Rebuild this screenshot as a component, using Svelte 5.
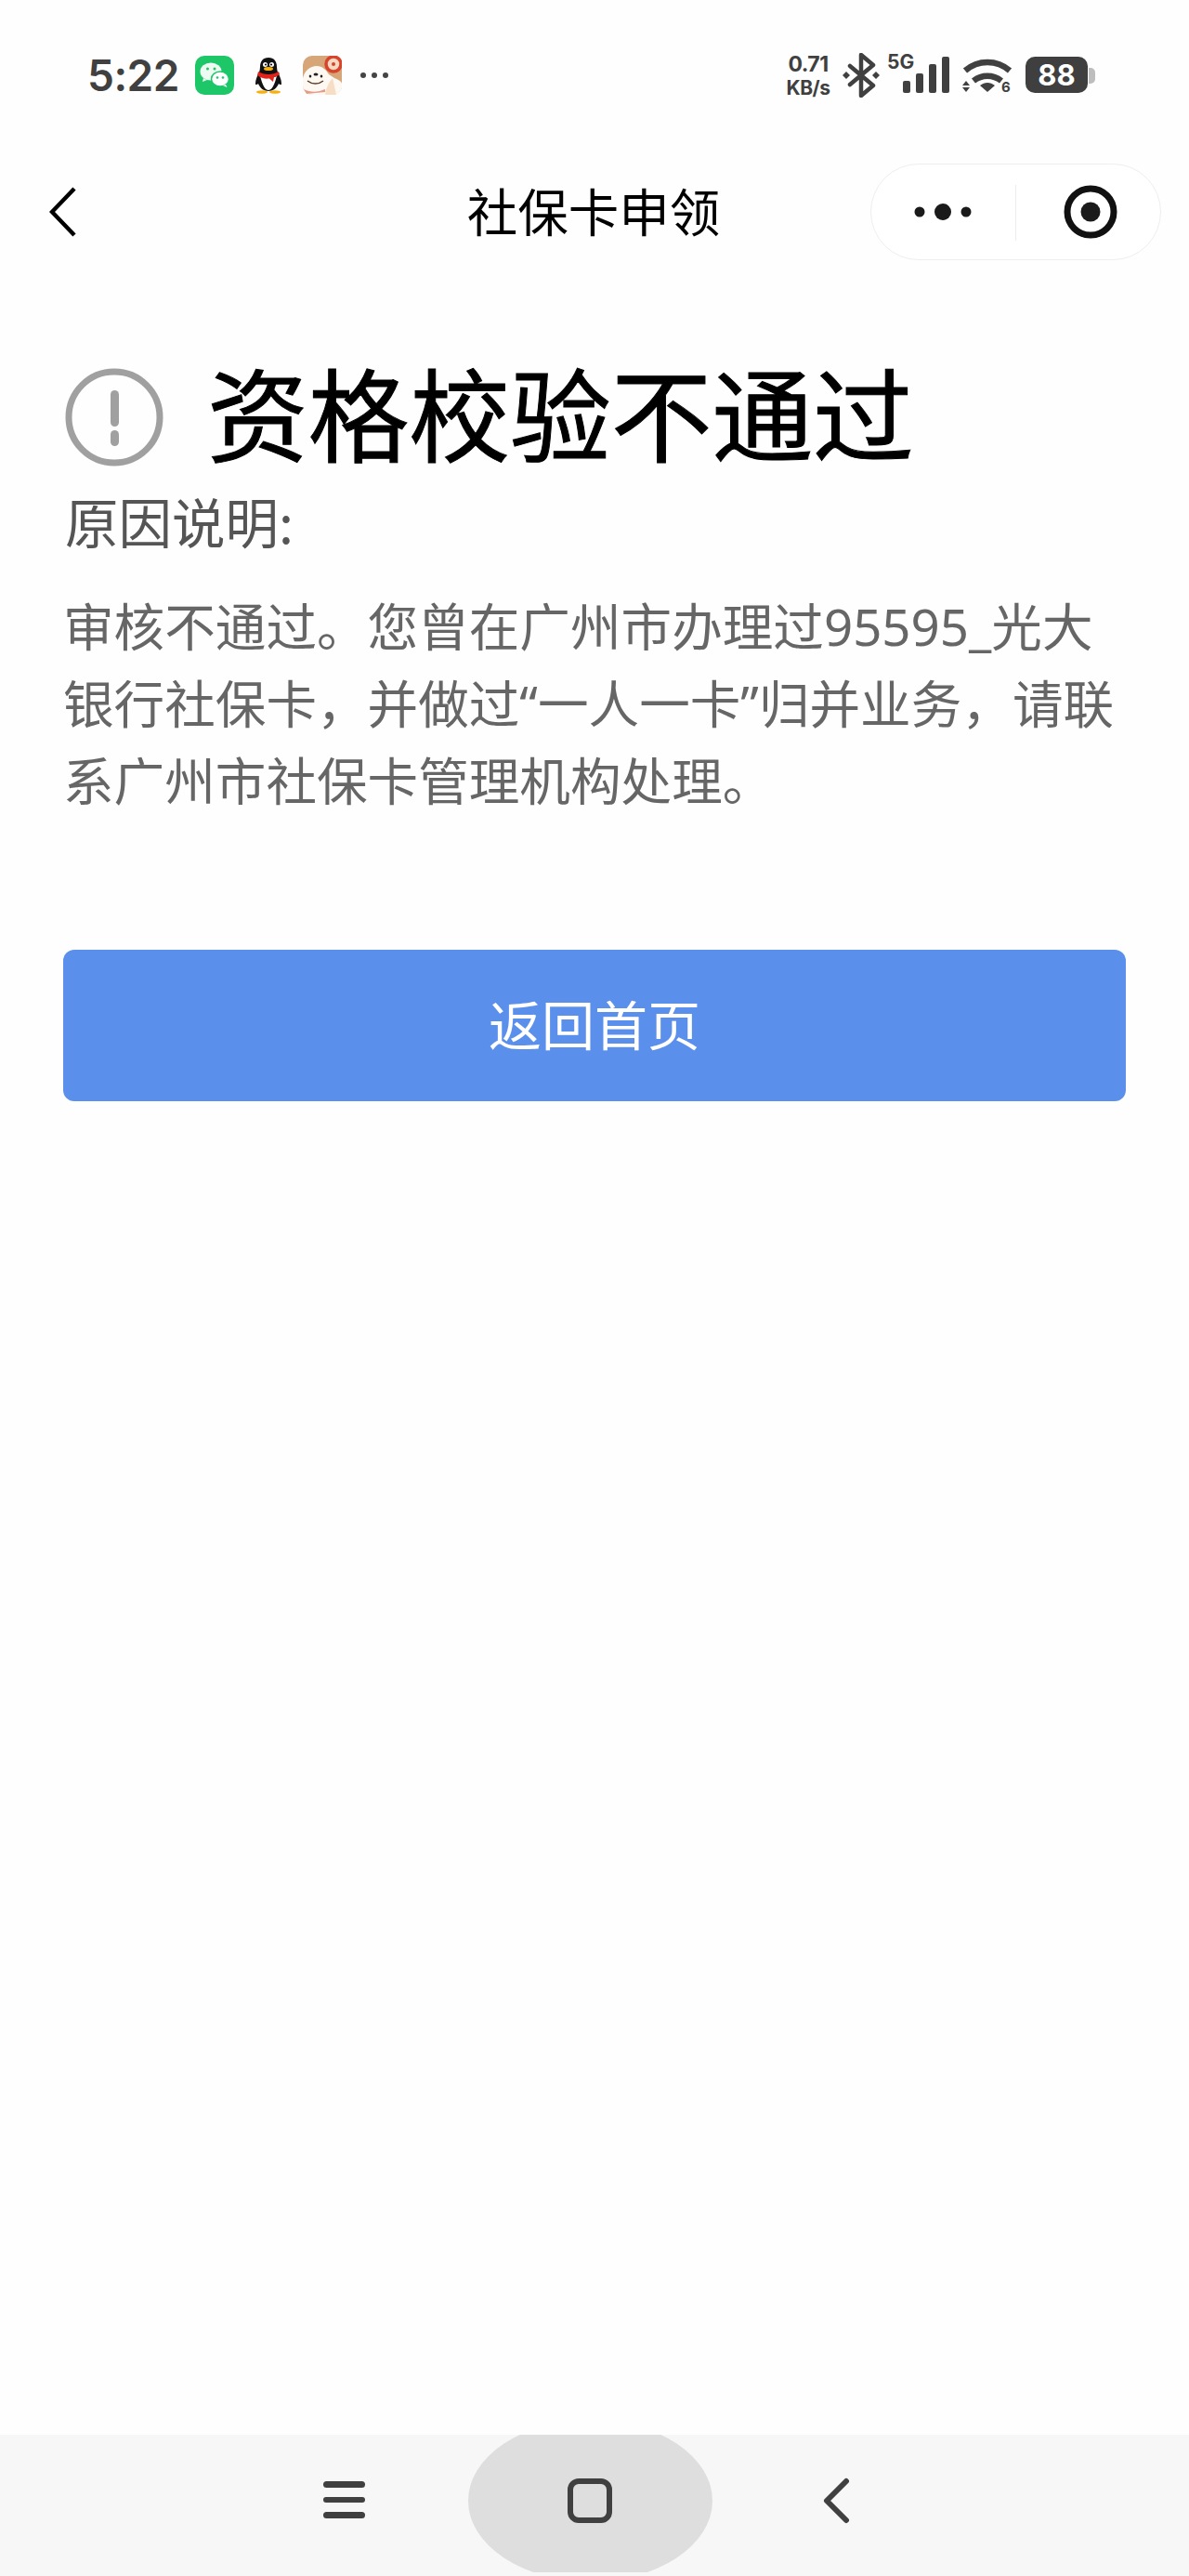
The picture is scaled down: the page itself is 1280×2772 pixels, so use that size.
<script>
  const lines = ['审核不通过。您曾在广州市办理过95595_光大', '银行社保卡，并做过“一人一卡”归并业务，请联', '系广州市社保卡管理机构处理。'];
</script>

<div class="page">
  <div class="status">
    <span class="time">5:22</span>
    <svg class="app wechat" viewBox="0 0 42 42">
      <rect width="42" height="42" rx="10" fill="#1dc768"/>
      <ellipse cx="17" cy="17" rx="11.5" ry="9.5" fill="#fff" opacity=".92"/>
      <path d="M9 24l-1 4 5-2z" fill="#fff" opacity=".92"/>
      <ellipse cx="27" cy="25" rx="9.5" ry="8" fill="#fff" stroke="#1dc768" stroke-width="1.5"/>
      <path d="M33 31l1.5 3-4.5-2z" fill="#fff"/>
      <circle cx="13.500" cy="14" r="1.500" fill="#1dc768"/><circle cx="21" cy="14" r="1.500" fill="#1dc768"/>
      <circle cx="24" cy="23.500" r="1.300" fill="#1dc768"/><circle cx="30" cy="23.500" r="1.300" fill="#1dc768"/>
    </svg>
    <svg class="qq" viewBox="0 0 32 40">
      <path d="M16 1c-6 0-9 4-9 10 0 2-.500 4-1 6-2 3-4 8-4 12 0 2 2 1 3 0 2 5 6 8 11 8s9-3 11-8c1 1 3 2 3 0 0-4-2-9-4-12-.500-2-1-4-1-6 0-6-3-10-9-10z" fill="#111"/>
      <path d="M7 21c2 6 4 15 9 15s7-9 9-15c-5 2-13 2-18 0z" fill="#fff"/>
      <path d="M5 16c6 4 16 4 22 0l1 3c-2 2-4 2.500-6 3l-1 5-4-3.500c-4 .500-9 0-13-3.500z" fill="#e2231a"/>
      <ellipse cx="16" cy="13" rx="5" ry="2" fill="#f6b10f"/>
      <circle cx="12.500" cy="8.500" r="2.500" fill="#fff"/><circle cx="19.500" cy="8.500" r="2.500" fill="#fff"/>
      <circle cx="13" cy="8.500" r="1.100" fill="#111"/><circle cx="19" cy="8.500" r="1.100" fill="#111"/>
      <ellipse cx="9" cy="38" rx="6" ry="1.800" fill="#f6b10f"/><ellipse cx="23" cy="38" rx="6" ry="1.800" fill="#f6b10f"/>
    </svg>
    <svg class="app dog" viewBox="0 0 42 42">
      <rect width="42" height="42" rx="10" fill="#d6a578"/>
      <circle cx="33" cy="9" r="8" fill="#f6d9c0" stroke="#d8432c" stroke-width="3.500"/>
      <circle cx="33" cy="9" r="2" fill="#d8432c"/>
      <path d="M0 24c2-8 8-13 15-13 6 0 10 4 13 9l6 4c5 2 8 4 8 6v4c-1 5-5 8-10 8H10C4 42 0 38 0 32z" fill="#fdf8f2"/>
      <path d="M24 42c1-8 4-13 8-18l4 18z" fill="#f7dcc6"/>
      <ellipse cx="8" cy="22" rx="1.300" ry="1.600" fill="#222"/><ellipse cx="20" cy="22" rx="1.300" ry="1.600" fill="#222"/>
      <ellipse cx="14" cy="20" rx="2.500" ry="1.500" fill="#222"/>
      <path d="M5 27c5 4 12 4 17 0" fill="none" stroke="#5c3a22" stroke-width="1.500"/>
      <path d="M1 36c8 4 16 3 23 0v3l-20 2z" fill="#d8745c" opacity=".7"/>
    </svg>
    <span class="more"><i></i><i></i><i></i></span>

    <span class="right">
      <span class="speed"><b>0.71</b><b>KB/s</b></span>
      <svg class="bt" viewBox="0 0 44 48">
        <path d="M10 14l25 21-13 11V2l13 11-25 21" fill="none" stroke="#404040" stroke-width="4.500" stroke-linejoin="round" stroke-linecap="round"/>
        <path d="M6 20l4 4-4 4-4-4zM38 20l4 4-4 4-4-4z" fill="#404040"/>
      </svg>
      <span class="net">
        <b class="g">5G</b>
        <span class="bars"><i class="b1"></i><i class="b2"></i><i class="b3"></i><i class="b4"></i></span>
      </span>
      <span class="wifiwrap">
        <svg class="wifi" viewBox="0 0 56 40">
          <path d="M4 15C18 3 38 3 52 15" fill="none" stroke="#404040" stroke-width="6.500"/>
          <path d="M13 26c9-7 21-7 30 0" fill="none" stroke="#404040" stroke-width="6.500"/>
          <path d="M20 31c5-4 11-4 16 0l-8 7z" fill="#404040"/>
          <path d="M5 26l4 5H1zM5 38l4-5H1z" fill="#404040"/>
        </svg>
        <span class="six">6</span>
      </span>
      <span class="battery"><span class="level">88</span><i class="cap"></i></span>
    </span>
  </div>

  <header class="nav">
    <svg class="back" viewBox="0 0 30 54"><path d="M27 2L3 27l24 25" fill="none" stroke="#000" stroke-width="4.500"/></svg>
    <h2>社保卡申领</h2>
    <div class="capsule">
      <span class="cell first">
        <svg width="64" height="20" viewBox="0 0 64 20"><circle cx="6" cy="10" r="5.500"/><circle cx="31" cy="10" r="9"/><circle cx="56" cy="10" r="5.500"/></svg>
      </span>
      <span class="divider"></span>
      <span class="cell">
        <svg width="58" height="58" viewBox="0 0 58 58"><circle cx="29" cy="29" r="25" fill="none" stroke="#111" stroke-width="7"/><circle cx="29" cy="29" r="10.500"/></svg>
      </span>
    </div>
  </header>

  <main>
    <div class="result">
      <svg class="warn" viewBox="0 0 106 106">
        <circle cx="53" cy="53" r="49" fill="none" stroke="#a0a0a0" stroke-width="7"/>
        <rect x="49" y="24" width="9" height="39" rx="4.500" fill="#a0a0a0"/>
        <rect x="49" y="67" width="9" height="17" rx="4.500" fill="#a0a0a0"/>
      </svg>
      <h1>资格校验不通过</h1>
    </div>
    <div class="label">原因说明:</div>
    <p>{#each lines as l}<span>{l}</span>{/each}</p>
    <button>返回首页</button>
  </main>

  <footer>
    <div class="menu"><i></i><i></i><i></i></div>
    <div class="homeclip"><div class="home"><span class="sq"></span></div></div>
    <svg class="nback" viewBox="0 0 32 50"><path d="M27 4L6 25l21 21" fill="none" stroke="#404040" stroke-width="6" stroke-linecap="round" stroke-linejoin="round"/></svg>
  </footer>
</div>

<style>
  :global(body) { margin: 0; background: #fff; }
  * { box-sizing: border-box; }
  .page {
    height: 2772px; width: 1280px; display: flex; flex-direction: column; overflow: hidden;
    background: #fefefe;
    font-family: "Noto Sans CJK SC", "Noto Sans", sans-serif;
  }
  .status { height: 176px; flex: none; display: flex; align-items: flex-start; padding: 60px 0 0 94px; color: #404040; font-family: Inter, sans-serif; }
  .time { font-size: 46px; font-weight: 600; line-height: 42px; width: 116px; letter-spacing: -.5px; }
  .app { width: 42px; height: 42px; flex: none; }
  .qq { width: 32px; height: 40px; margin: 1px 21px 0; flex: none; }
  .more { display: flex; gap: 6px; margin: 18px 0 0 20px; width: 455px; }
  .more i { width: 6px; height: 6px; border-radius: 50%; background: #444; }
  .right { display: flex; align-items: flex-start; }
  .speed { display: flex; flex-direction: column; align-items: center; width: 54px; font-size: 23px; line-height: 26px; margin-top: -4px; }
  .speed b { font-weight: 700; letter-spacing: -.5px; }
  .speed b + b { font-size: 21px; }
  .bt { width: 44px; height: 48px; margin: -3px 0 0 8px; flex: none; }
  .net { position: relative; width: 71px; height: 42px; margin-left: 6px; }
  .g { position: absolute; left: 0; top: -5px; font-size: 21px; line-height: 24px; font-weight: 700; }
  .bars { position: absolute; left: 17px; bottom: 2px; display: flex; align-items: flex-end; gap: 6px; }
  .bars i { width: 8px; border-radius: 2px; background: #404040; }
  .b1 { height: 13px; } .b2 { height: 21px; } .b3 { height: 31px; } .b4 { height: 39px; }
  .wifiwrap { position: relative; width: 56px; height: 40px; margin: 1px 0 0 9px; flex: none; }
  .wifi { display: block; width: 56px; height: 40px; }
  .six { position: absolute; left: 43px; top: 25px; font: 700 15px/16px Inter, sans-serif; color: #404040; }
  .battery { position: relative; width: 67px; height: 39px; margin: 1px 0 0 13px; background: #3f3f3f; border-radius: 10px; display: flex; align-items: center; justify-content: center; }
  .level { color: #fff; font-size: 31px; font-weight: 700; line-height: 39px; }
  .cap { position: absolute; right: -8px; top: 12px; width: 7px; height: 17px; background: #bdbdbd; border-radius: 0 5px 5px 0; }

  .nav { position: relative; height: 103px; flex: none; display: flex; align-items: center; justify-content: center; }
  .back { position: absolute; left: 53px; top: 25px; width: 30px; height: 54px; }
  h2 { margin: 0 0 4px -2px; font-size: 54.500px; font-weight: 400; line-height: 70px; color: #000; }
  .capsule { position: absolute; left: 937px; top: 0; width: 313px; height: 104px; border: 1.500px solid #eeeeee; border-radius: 52px; display: flex; align-items: center; background: #fff; }
  .cell { flex: 1; display: flex; align-items: center; justify-content: center; padding-left: 4px; }
  .cell.first { flex: none; width: 155px; padding-left: 0; }
  .cell svg { fill: #1a1a1a; }
  .divider { width: 1px; height: 60px; background: #ececec; margin-top: 2px; }

  main { flex: 1; padding: 116px 68px 0 70px; }
  .result { display: flex; align-items: center; height: 108px; }
  .warn { width: 106px; height: 106px; flex: none; }
  h1 { margin: 0 0 0 47px; padding-bottom: 14px; font-size: 108.700px; font-weight: 400; line-height: 108px; color: #000; white-space: nowrap; -webkit-text-stroke: 1px #000; }
  .label { font-size: 57.500px; line-height: 72px; color: #555; margin-top: 21px; }
  p { margin: 37px 0 0 -2px; font-size: 54.600px; line-height: 83px; color: #666; font-family: "Noto Sans", "Noto Sans CJK SC", sans-serif; }
  p span { display: block; white-space: nowrap; }
  button {
    display: block; width: 1144px; height: 163px; margin: 140px 0 0 -2px; padding: 0 0 8px; border: 0; border-radius: 12px;
    background: #5a8fec; color: #fff; font: inherit; font-size: 57px;
  }

  footer { position: relative; height: 152px; flex: none; background: #f7f7f7; overflow: hidden; }
  .menu { position: absolute; left: 348px; top: 50px; width: 45px; display: flex; flex-direction: column; gap: 10px; }
  .menu i { height: 6.500px; border-radius: 4px; background: #404040; }
  .homeclip { position: absolute; left: 504px; top: 0; width: 263px; height: 148px; overflow: hidden; }
  .home { margin-top: -16px; width: 263px; height: 174px; border-radius: 50%; background: #dedede; display: flex; align-items: center; justify-content: center; }
  .sq { width: 48px; height: 48px; border: 6px solid #404040; border-radius: 12px; margin-right: 1px; }
  .nback { position: absolute; left: 884px; top: 46px; width: 32px; height: 50px; }
</style>
